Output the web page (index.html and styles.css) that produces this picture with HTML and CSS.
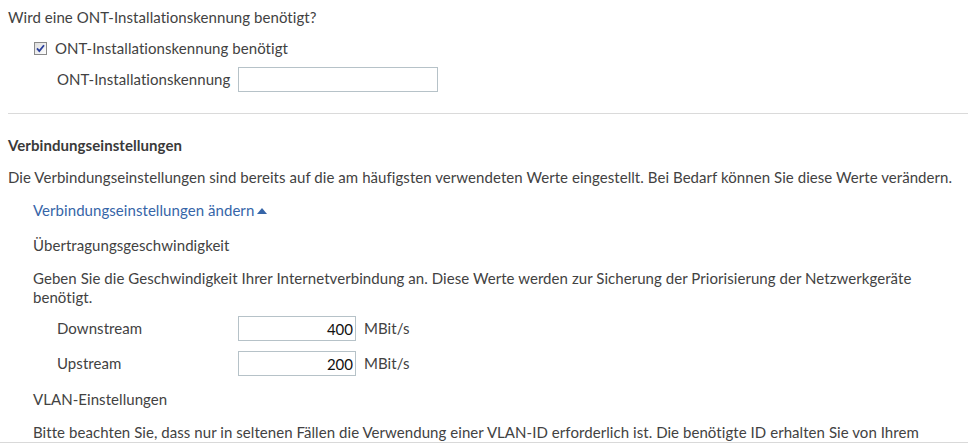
FILE: index.html
```html
<!DOCTYPE html>
<html lang="de">
<head>
<meta charset="utf-8">
<title>Internetzugang</title>
<link rel="stylesheet" href="styles.css">
</head>
<body>
<div class="page">
  <section class="block">
    <p class="question">Wird eine ONT-Installationskennung benötigt?</p>
    <label class="check-row">
      <input class="check-native" type="checkbox" checked>
      <svg class="check-box" width="13" height="13" viewBox="0 0 13 13" aria-hidden="true">
        <defs>
          <linearGradient id="boxfill" x1="0" y1="0" x2="1" y2="1">
            <stop offset="0" stop-color="#dcdcdc"/>
            <stop offset="1" stop-color="#ffffff"/>
          </linearGradient>
        </defs>
        <rect x="0.5" y="0.5" width="12" height="12" fill="url(#boxfill)" stroke="#8a8a8a"/>
        <path d="M3 6.4 L5.3 9 L10 3.2" fill="none" stroke="#2a3f9c" stroke-width="1.8"/>
      </svg>
      <span>ONT-Installationskennung benötigt</span>
    </label>
    <div class="field-row ont">
      <span class="field-label">ONT-Installationskennung</span>
      <input class="text-input wide" type="text">
    </div>
  </section>

  <hr class="divider">

  <section class="block">
    <h4 class="heading">Verbindungseinstellungen</h4>
    <p class="para">Die Verbindungseinstellungen sind bereits auf die am häufigsten verwendeten Werte eingestellt. Bei Bedarf können Sie diese Werte verändern.</p>
    <div class="indent">
      <a class="toggle" href="#">Verbindungseinstellungen ändern<span class="arrow"></span></a>
      <p class="sub">Übertragungsgeschwindigkeit</p>
      <p class="para tight">Geben Sie die Geschwindigkeit Ihrer Internetverbindung an. Diese Werte werden zur Sicherung der Priorisierung der Netzwerkgeräte benötigt.</p>
      <div class="field-row speed">
        <span class="field-label">Downstream</span>
        <input class="text-input num" type="text" value="400">
        <span class="unit">MBit/s</span>
      </div>
      <div class="field-row speed last">
        <span class="field-label">Upstream</span>
        <input class="text-input num" type="text" value="200">
        <span class="unit">MBit/s</span>
      </div>
      <p class="sub">VLAN-Einstellungen</p>
      <p class="para">Bitte beachten Sie, dass nur in seltenen Fällen die Verwendung einer VLAN-ID erforderlich ist. Die benötigte ID erhalten Sie von Ihrem</p>
    </div>
  </section>
</div>
</body>
</html>
```

FILE: styles.css
```css
html, body {
  margin: 0;
  padding: 0;
  background: #fff;
}

body {
  font-family: "Lato", "Open Sans", sans-serif;
  font-size: 15px;
  line-height: 19px;
  letter-spacing: 0.06px;
  color: #424242;
  overflow: hidden;
}

.page {
  box-sizing: border-box;
  height: 443px;
  padding: 8px 8px 0 8px;
  overflow: hidden;
  border-bottom: 1px solid #d9d9d9;
}

p, h4 {
  margin: 0;
}

.question {
  margin-bottom: 12px;
}

/* checkbox row: the native control stays for semantics, the svg draws the box */
.check-row {
  display: flex;
  align-items: center;
  padding-left: 26px;
  height: 19px;
}

.check-native {
  position: absolute;
  opacity: 0;
  width: 0;
  height: 0;
  margin: 0;
}

.check-box {
  flex: none;
  margin: 0 8px 1px 0;
}

.field-row {
  display: flex;
  align-items: center;
}

.field-row .field-label {
  box-sizing: border-box;
  flex: none;
}

.ont {
  margin-top: 9px;
}

.ont .field-label {
  padding-left: 49px;
  width: 230px;
}

.text-input {
  box-sizing: border-box;
  height: 25px;
  border: 1px solid #b6c2c8;
  padding: 0 2px;
  font: inherit;
  color: #111;
  margin: 0;
  outline: none;
  background: #fff;
}

.wide {
  width: 200px;
}

.divider {
  border: 0;
  border-top: 1px solid #dadada;
  margin: 21px -8px 22px 0;
}

.heading {
  font-weight: bold;
  font-size: 15px;
  color: #3a3a3a;
  margin-bottom: 13px;
}

.para {
  margin-bottom: 14px;
}

.para.tight {
  margin-bottom: 9px;
}

.indent {
  padding-left: 25px;
}

.toggle {
  display: inline-block;
  color: #3665a8;
  text-decoration: none;
  margin-bottom: 16px;
}

.arrow {
  display: inline-block;
  width: 0;
  height: 0;
  margin-left: 3px;
  border-left: 5px solid transparent;
  border-right: 5px solid transparent;
  border-bottom: 6px solid #3665a8;
  vertical-align: 2px;
}

.sub {
  margin-bottom: 14px;
}

.speed {
  margin-bottom: 10px;
}

.speed.last {
  margin-bottom: 14px;
}

.speed .field-label {
  padding-left: 24px;
  width: 205px;
}

.num {
  width: 118px;
  text-align: right;
}

.unit {
  margin-left: 8px;
}
```
